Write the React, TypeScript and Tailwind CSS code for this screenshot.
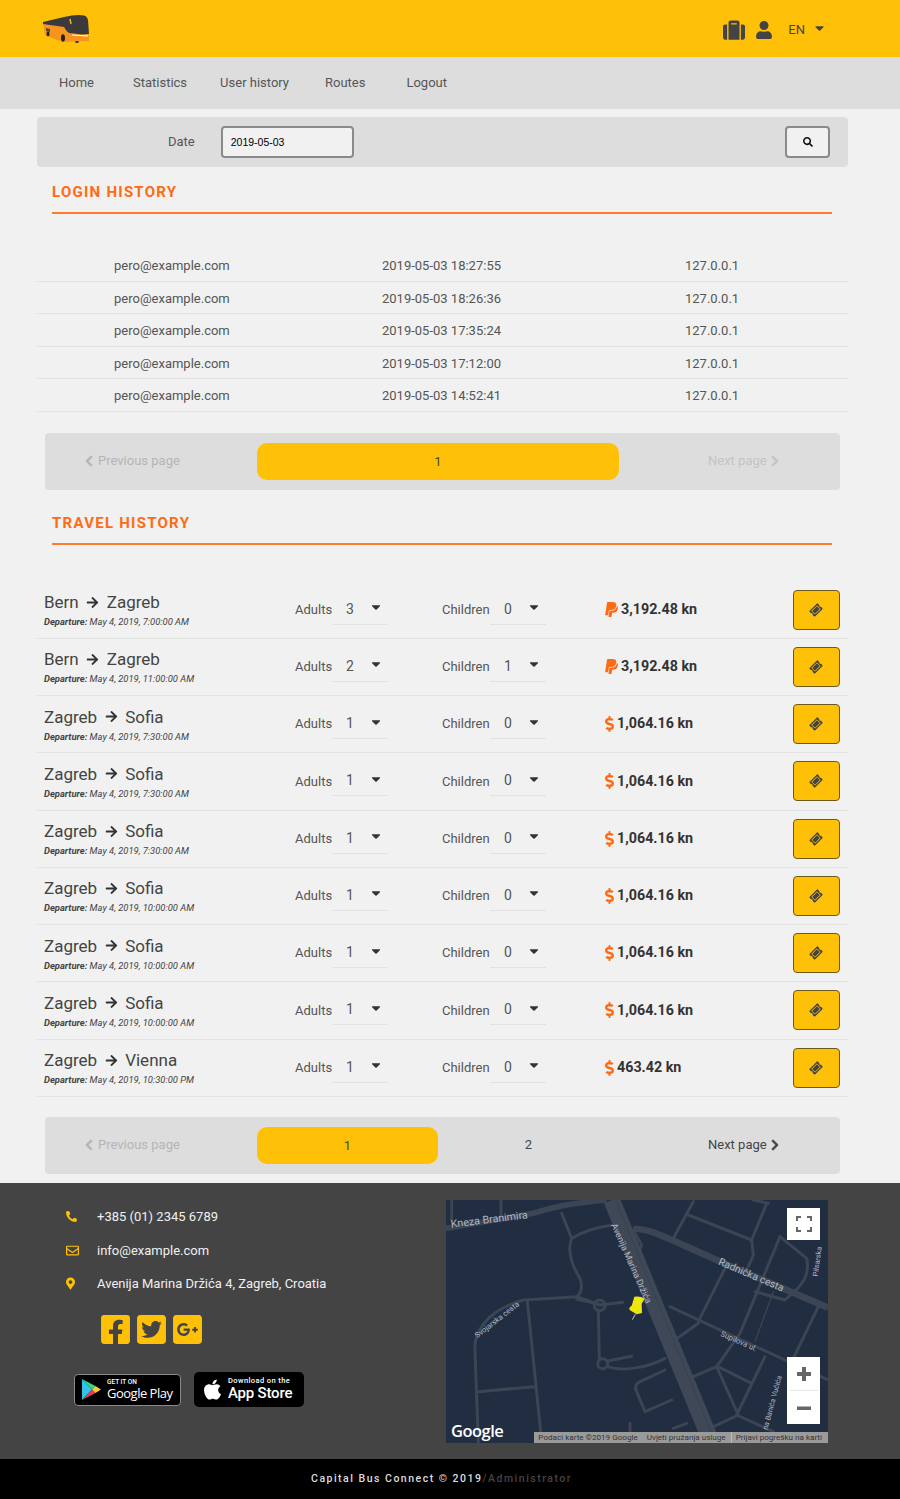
import React from "react";
import {
  FaSuitcase, FaUser, FaCaretDown, FaSearch, FaArrowRight, FaPaypal, FaDollarSign, FaTicketAlt,
  FaPhoneAlt, FaRegEnvelope, FaMapMarkerAlt, FaFacebookSquare, FaTwitterSquare, FaGooglePlusSquare,
  FaChevronLeft, FaChevronRight, FaApple,
} from "react-icons/fa";

const logins = ["18:27:55", "18:26:36", "17:35:24", "17:12:00", "14:52:41"];

type Trip = { from: string; to: string; dep: string; a: number; c: number; pay: "p" | "d"; price: string };
const trips: Trip[] = [
  { from: "Bern", to: "Zagreb", dep: "May 4, 2019, 7:00:00 AM", a: 3, c: 0, pay: "p", price: "3,192.48 kn" },
  { from: "Bern", to: "Zagreb", dep: "May 4, 2019, 11:00:00 AM", a: 2, c: 1, pay: "p", price: "3,192.48 kn" },
  { from: "Zagreb", to: "Sofia", dep: "May 4, 2019, 7:30:00 AM", a: 1, c: 0, pay: "d", price: "1,064.16 kn" },
  { from: "Zagreb", to: "Sofia", dep: "May 4, 2019, 7:30:00 AM", a: 1, c: 0, pay: "d", price: "1,064.16 kn" },
  { from: "Zagreb", to: "Sofia", dep: "May 4, 2019, 7:30:00 AM", a: 1, c: 0, pay: "d", price: "1,064.16 kn" },
  { from: "Zagreb", to: "Sofia", dep: "May 4, 2019, 10:00:00 AM", a: 1, c: 0, pay: "d", price: "1,064.16 kn" },
  { from: "Zagreb", to: "Sofia", dep: "May 4, 2019, 10:00:00 AM", a: 1, c: 0, pay: "d", price: "1,064.16 kn" },
  { from: "Zagreb", to: "Sofia", dep: "May 4, 2019, 10:00:00 AM", a: 1, c: 0, pay: "d", price: "1,064.16 kn" },
  { from: "Zagreb", to: "Vienna", dep: "May 4, 2019, 10:30:00 PM", a: 1, c: 0, pay: "d", price: "463.42 kn" },
];

function BusLogo() {
  return (
    <svg width="48" height="29" viewBox="0 0 48 29">
      <path d="M1 9 L22 13 Q24 17 27 19 L47 21 L47 27 L24 28 L15 26 L3 21 Z" fill="#f7941d" />
      <path d="M1 8 L22 3 Q35 0 42 1.5 Q45 2 46 6 L47 20 L40 20.5 L27 19 Q24 17 22 13 L1 10 Z" fill="#3a3a3c" />
      <path d="M28 5 L29 10" stroke="#f7b733" strokeWidth="1.4" />
      <path d="M30 21 L46 22" stroke="#fff" strokeWidth="1.2" />
      <path d="M4 14 L8 15 L8 18 L4 17 Z" fill="#5a4a2a" />
      <ellipse cx="21" cy="24" rx="2" ry="3.8" fill="#222" />
      <ellipse cx="6" cy="20" rx="1.5" ry="2.4" fill="#222" />
      <ellipse cx="35" cy="28" rx="2" ry="1" fill="#333" />
    </svg>
  );
}

function Heading({ children }: { children: React.ReactNode }) {
  return (
    <div className="mr-[68px] ml-[52px] border-b-2 border-[#ff7a2c] pb-[10px] text-[15px] leading-[20px] font-bold tracking-[1.25px] text-[#ff6b14]">
      {children}
    </div>
  );
}

function Pill({ label }: { label: string }) {
  return <div className="mt-px flex h-[37px] items-center justify-center rounded-[10px] bg-[#ffc107]">{label}</div>;
}

function Pager({ two }: { two?: boolean }) {
  return (
    <div className="mr-[60px] ml-[45px] grid h-[57px] grid-cols-[212px_1fr_221px] items-center rounded-[4px] bg-[#dddddd] text-[13px] text-[#444]">
      <div className="flex items-center gap-[5px] pl-[40px] text-[#b5b5b5]">
        <FaChevronLeft className="h-[12px] w-[8px]" stroke="currentColor" strokeWidth={30} />
        <span>Previous page</span>
      </div>
      {two ? (
        <div className="grid grid-cols-2 items-center text-center">
          <Pill label="1" />
          <div>2</div>
        </div>
      ) : (
        <Pill label="1" />
      )}
      <div className={`flex items-center gap-[4px] pl-[89px] ${two ? "text-[#444]" : "text-[#c4c4c4]"}`}>
        <span>Next page</span>
        <FaChevronRight className="h-[12px] w-[8px]" stroke="currentColor" strokeWidth={30} />
      </div>
    </div>
  );
}

function Select({ value }: { value: number }) {
  return (
    <div className="flex h-[30px] w-[56px] items-center justify-between border-b border-[#e2e2e2] pr-[6px] pl-[14px] text-[14px] text-[#555]">
      <span>{value}</span>
      <FaCaretDown className="mb-[4px] h-[14px] w-[12px] text-[#333]" />
    </div>
  );
}

function TripRow({ t }: { t: Trip }) {
  return (
    <div className="flex h-[57.25px] items-center border-b border-[#e2e2e2] pr-[8px] pl-[7px]">
      <div className="w-[251px]">
        <div className="flex items-center text-[17px] leading-[22px] text-[#444]">
          <span>{t.from}</span>
          <FaArrowRight className="mx-[7.5px] h-[13px] w-[13px] text-[#333]" />
          <span>{t.to}</span>
        </div>
        <div className="mt-[3px] text-[9.4px] leading-[12px] text-[#444] italic">
          <b>Departure:</b> {t.dep}
        </div>
      </div>
      <div className="flex w-[147px] items-center text-[13px] text-[#555]">
        <span className="w-[37px]">Adults</span>
        <Select value={t.a} />
      </div>
      <div className="flex w-[163px] items-center text-[13px] text-[#555]">
        <span className="w-[48px]">Children</span>
        <Select value={t.c} />
      </div>
      <div className="flex flex-1 items-center gap-[3px] text-[14.3px] font-bold text-[#333]">
        {t.pay === "p" ? (
          <FaPaypal className="h-[17px] w-[13px] text-[#ff6b14]" />
        ) : (
          <FaDollarSign className="h-[16px] w-[9px] text-[#ff6b14]" />
        )}
        <span>{t.price}</span>
      </div>
      <div className="flex h-[40px] w-[47px] items-center justify-center rounded-[4px] border border-[#6b5a1c] bg-[#ffc107]">
        <FaTicketAlt className="mr-[2px] h-[12px] w-[12px] -rotate-45 text-[#444]" />
      </div>
    </div>
  );
}

function MapView() {
  const road = "#3b4554";
  return (
    <div className="relative h-[243px] w-[382px] overflow-hidden bg-[#212d40]">
      <svg className="block" width="382" height="243" viewBox="18 15 1146 729" fill="none">
        <g stroke={road} strokeWidth="9" strokeLinejoin="round" strokeLinecap="round">
          <path d="M35 15 L35 75 M183 15 L183 65" />
          <path d="M365 55 L395 130 C380 170 395 210 420 250 C430 280 420 300 410 305 L250 315 C130 350 100 420 105 470 L115 744" />
          <path d="M395 130 C430 110 470 95 520 90" />
          <path d="M410 305 L480 330 L548 322 M410 312 L465 325" />
          <circle cx="479" cy="331" r="16" />
          <path d="M475 345 L478 490 M262 318 L302 710 M115 590 L285 575" />
          <circle cx="488" cy="506" r="15" />
          <path d="M503 498 L575 484 M505 515 C540 530 620 520 675 490" />
          <path d="M690 335 L1164 555 M775 380 L855 220 M705 435 L775 385" />
          <path d="M1020 125 L1100 190 C1110 240 1090 270 1040 310 M945 290 L1035 315" />
          <path d="M1020 125 L900 415 L830 515 L760 545 M830 515 L895 660 L820 695 M840 518 L935 565 M975 485 L890 660 L1000 710" />
          <path d="M1135 335 L1060 490" />
          <path d="M700 130 L760 20 M745 60 L935 135 L940 180 L925 215 M935 135 L980 25 M940 15 L985 25" />
          <path d="M600 560 L675 525 M600 560 Q580 570 590 590 L615 650 L695 615" />
          <path d="M1000 290 L945 440" strokeWidth="4" />
          <path d="M700 700 L740 685 M570 685 L570 744" />
          <path d="M580 105 L605 150 L595 175" />
        </g>
        <path d="M18 100 L280 55 C320 45 340 30 500 15" stroke={road} strokeWidth="17" />
        <path d="M580 102 C630 100 660 120 830 195 L1164 338" stroke={road} strokeWidth="20" />
        <path d="M515 15 L815 744" stroke="#3f4857" strokeWidth="50" />
        <path d="M527 15 L827 744" stroke="#333c4a" strokeWidth="2" />
        <g fill="#b0b8c3" fontFamily="Roboto, sans-serif">
          <text x="34" y="98" transform="rotate(-7 34 98)" fontSize="32">Kneza Branimira</text>
          <text x="513" y="90" transform="rotate(66 513 90)" fontSize="27">Avenija Marina Držića</text>
          <text x="833" y="208" transform="rotate(23 833 208)" fontSize="31">Radnička cesta</text>
          <text x="112" y="430" transform="rotate(-38 112 430)" fontSize="23">Svojarska cesta</text>
          <text x="840" y="422" transform="rotate(24 840 422)" fontSize="23">Supilova ul.</text>
          <text x="1133" y="245" transform="rotate(-82 1133 245)" fontSize="22">Pilsarska</text>
          <text x="982" y="706" transform="rotate(-75 982 706)" fontSize="22">na Banića Vučića</text>
        </g>
        <path d="M583 305 Q600 302 614 311 L605 326 L606 354 L590 358 L570 346 Q564 338 575 332 Z" fill="#eee60c" />
        <path d="M586 358 L577 374" stroke="#c9c9c9" strokeWidth="3" />
      </svg>
      <div className="absolute bottom-[2px] left-[5px] text-[16.5px] leading-[20px] font-semibold tracking-[-0.5px] text-white" style={{ fontFamily: '"Open Sans", sans-serif' }}>
        Google
      </div>
      <div className="absolute right-0 bottom-0 flex h-[11px] items-center bg-[#9a9a9a] text-[8.1px] leading-[11px] text-[#333]">
        <span className="pr-[9px] pl-[4px]">Podaci karte ©2019 Google</span>
        <span className="pr-[5px]">Uvjeti pružanja usluge</span>
        <span className="border-l border-[#bbb] pr-[6px] pl-[4px]">Prijavi pogrešku na karti</span>
      </div>
      <div className="absolute top-[8px] right-[8px] flex h-[32px] w-[33px] items-center justify-center bg-white">
        <svg width="16" height="16" viewBox="0 0 16 16" fill="none" stroke="#666" strokeWidth="2">
          <path d="M1 5 V1 H5 M11 1 H15 V5 M15 11 V15 H11 M5 15 H1 V11" />
        </svg>
      </div>
      <div className="absolute right-[8px] bottom-[19px] flex h-[67px] w-[33px] flex-col items-center bg-white">
        <svg className="mt-[9px]" width="16" height="16" viewBox="0 0 16 16" fill="#666">
          <path d="M6 1 H10 V6 H15 V10 H10 V15 H6 V10 H1 V6 H6 Z" />
        </svg>
        <div className="mt-[8px] h-px w-[28px] bg-[#e6e6e6]" />
        <svg className="mt-[9px]" width="16" height="16" viewBox="0 0 16 16" fill="#666">
          <path d="M1 6.5 H15 V10 H1 Z" />
        </svg>
      </div>
    </div>
  );
}

function GooglePlayBadge() {
  return (
    <div className="mt-[2px] flex h-[32px] w-[107px] items-center rounded-[4px] border border-[#8a8a8a] bg-black pl-[7px] text-white">
      <svg width="19" height="21" viewBox="0 0 19 21">
        <path d="M0 0 L10 10.5 L0 21 Z" fill="#2fc4e8" />
        <path d="M0 0 L13.5 7 L10 10.5 Z" fill="#3bd47c" />
        <path d="M0 21 L13.5 14 L10 10.5 Z" fill="#ee3b4d" />
        <path d="M13.5 7 L19 10.5 L13.5 14 L10 10.5 Z" fill="#fdc830" />
      </svg>
      <div className="ml-[6px]">
        <div className="text-[6.5px] leading-[7px] font-medium">GET IT ON</div>
        <div className="text-[13px] leading-[15px] tracking-[-0.5px]" style={{ fontFamily: '"Open Sans", sans-serif' }}>Google Play</div>
      </div>
    </div>
  );
}

function AppStoreBadge() {
  return (
    <div className="flex h-[35px] w-[110px] items-center rounded-[5px] bg-black pl-[9px] text-white">
      <FaApple className="h-[23px] w-[19px]" />
      <div className="ml-[6px]">
        <div className="text-[7.5px] leading-[8px] font-medium tracking-[0.4px]">Download on the</div>
        <div className="text-[15px] leading-[17px] font-medium tracking-[-0.2px]">App Store</div>
      </div>
    </div>
  );
}

export default function App() {
  return (
    <div className="flex min-h-[1499px] w-[900px] flex-col bg-[#f1f1f1]" style={{ fontFamily: 'Roboto, "Liberation Sans", sans-serif' }}>
      <header className="flex h-[57px] items-center justify-between bg-[#ffc107] pr-[75px] pl-[42px]">
        <BusLogo />
        <div className="mt-[2px] flex items-center text-[#444]">
          <FaSuitcase className="h-[22px] w-[22px]" />
          <FaUser className="ml-[11px] h-[18px] w-[16px]" />
          <span className="ml-[16px] text-[13px]">EN</span>
          <FaCaretDown className="mb-[3px] ml-[9px] h-[14px] w-[11px]" />
        </div>
      </header>

      <nav className="flex h-[52px] items-center bg-[#dddddd] text-[13px] text-[#555]">
        <span className="ml-[59px]">Home</span>
        <span className="ml-[39px]">Statistics</span>
        <span className="ml-[33px]">User history</span>
        <span className="ml-[36px]">Routes</span>
        <span className="ml-[41px]">Logout</span>
      </nav>

      <div className="mt-[8px] mr-[52px] ml-[37px] flex h-[50px] items-center rounded-[4px] bg-[#dddddd] pr-[18px]">
        <span className="ml-[131px] text-[13px] text-[#555]">Date</span>
        <div className="ml-[26px] flex h-[32px] w-[133px] items-center rounded-[4px] border-2 border-[#8a8a8a] bg-[#f1f1f1] pt-px pl-[8px] text-[10.5px] text-black" style={{ fontFamily: '"Liberation Sans", sans-serif' }}>
          2019-05-03
        </div>
        <div className="ml-auto flex h-[32px] w-[45px] items-center justify-center rounded-[4px] border-2 border-[#8a8a8a] bg-[#f1f1f1]">
          <FaSearch className="h-[10px] w-[10px] text-[#111]" />
        </div>
      </div>

      <div className="mt-[15px]">
        <Heading>LOGIN HISTORY</Heading>
      </div>

      <div className="mt-[35px] mr-[52px] ml-[37px] text-[13px] text-[#555]">
        {logins.map((t) => (
          <div key={t} className="flex h-[32.5px] items-center border-b border-[#e2e2e2] pt-[2px]">
            <span className="ml-[77px] w-[268px]">pero@example.com</span>
            <span className="w-[303px]">2019-05-03 {t}</span>
            <span>127.0.0.1</span>
          </div>
        ))}
      </div>

      <div className="mt-[21px]">
        <Pager />
      </div>

      <div className="mt-[23px]">
        <Heading>TRAVEL HISTORY</Heading>
      </div>

      <div className="mt-[37px] mr-[52px] ml-[37px]">
        {trips.map((t, i) => (
          <TripRow key={i} t={t} />
        ))}
      </div>

      <div className="mt-[19.75px]">
        <Pager two />
      </div>

      <footer className="mt-[9px] flex h-[276px] bg-[#444444] pt-[17px] pl-[66px] text-[13px] text-[#f0f0f0]">
        <div className="w-[380px]">
          <div className="flex h-[34px] items-center">
            <span className="w-[31px]"><FaPhoneAlt className="h-[11px] w-[11px] text-[#ffc107]" /></span>
            <span>+385 (01) 2345 6789</span>
          </div>
          <div className="flex h-[34px] items-center">
            <span className="w-[31px]"><FaRegEnvelope className="h-[13px] w-[13px] text-[#ffc107]" /></span>
            <span>info@example.com</span>
          </div>
          <div className="flex h-[32px] items-center">
            <span className="w-[31px]"><FaMapMarkerAlt className="h-[13px] w-[9px] text-[#ffc107]" /></span>
            <span>Avenija Marina Držića 4, Zagreb, Croatia</span>
          </div>
          <div className="mt-[13px] ml-[35px] flex gap-[7px] text-[#ffc107]">
            <FaFacebookSquare className="h-[33px] w-[29px]" />
            <FaTwitterSquare className="h-[33px] w-[29px]" />
            <FaGooglePlusSquare className="h-[33px] w-[29px]" />
          </div>
          <div className="mt-[26px] ml-[8px] flex items-start gap-[13px]">
            <GooglePlayBadge />
            <AppStoreBadge />
          </div>
        </div>
        <MapView />
      </footer>

      <div className="flex h-[40px] items-center justify-center bg-black pr-[17px] text-[10.5px] font-medium tracking-[1.5px] text-[#ddd]">
        Capital Bus Connect © 2019<span className="text-[#444]">/Administrator</span>
      </div>
    </div>
  );
}
